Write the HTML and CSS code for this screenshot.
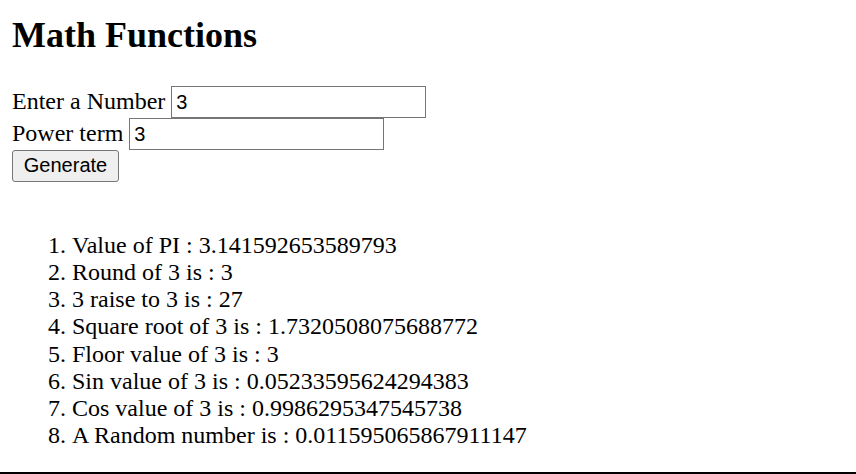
FILE: index.html
```html
<!DOCTYPE html>
<html lang="en">
<head>
<meta charset="utf-8">
<title>Math Functions</title>
<link rel="stylesheet" href="styles.css">
</head>
<body>
<h2 class="title">Math Functions</h2>
<form class="form">
  <div class="row"><label for="num">Enter a Number</label> <input id="num" class="field" type="text" value="3"></div>
  <div class="row"><label for="pow">Power term</label> <input id="pow" class="field" type="text" value="3"></div>
  <div class="row"><button type="button" class="btn">Generate</button></div>
</form>
<ol class="results">
  <li>Value of PI : 3.141592653589793</li>
  <li>Round of 3 is : 3</li>
  <li>3 raise to 3 is : 27</li>
  <li>Square root of 3 is : 1.7320508075688772</li>
  <li>Floor value of 3 is : 3</li>
  <li>Sin value of 3 is : 0.05233595624294383</li>
  <li>Cos value of 3 is : 0.9986295347545738</li>
  <li>A Random number is : 0.011595065867911147</li>
</ol>
<div class="rule"></div>
</body>
</html>
```
FILE: styles.css
```css
html {
  overflow: hidden;
}
body {
  margin: 0;
  padding: 15px 0 0 12px;
  background: #fff;
  color: #000;
  font-family: "Liberation Serif", "Times New Roman", serif;
  font-size: 24px;
}
.title {
  margin: 0 0 30px;
  font-size: 36px;
  line-height: 41px;
  font-weight: bold;
}
.form {
  margin: 0;
}
.row {
  height: 32px;
  line-height: 27px;
}
.row label {
  vertical-align: baseline;
}
.field {
  box-sizing: border-box;
  width: 255px;
  height: 32px;
  margin: 0;
  padding: 1px 4px;
  border: 1px solid #767676;
  border-radius: 0;
  background: #fff;
  color: #000;
  font-family: "Liberation Sans", Arial, sans-serif;
  font-size: 20px;
  vertical-align: baseline;
}
.btn {
  box-sizing: border-box;
  width: 107px;
  height: 32px;
  margin: 0;
  padding: 0 8px 2px;
  border: 1px solid #767676;
  border-radius: 3px;
  background: #efefef;
  color: #000;
  font-family: "Liberation Sans", Arial, sans-serif;
  font-size: 20px;
  vertical-align: top;
}
.results {
  margin: 50px 0 0;
  padding-left: 60px;
  line-height: 27.14px;
}
.rule {
  height: 2px;
  margin-top: 22.6px;
  margin-left: -12px;
  background: #000;
}
```
